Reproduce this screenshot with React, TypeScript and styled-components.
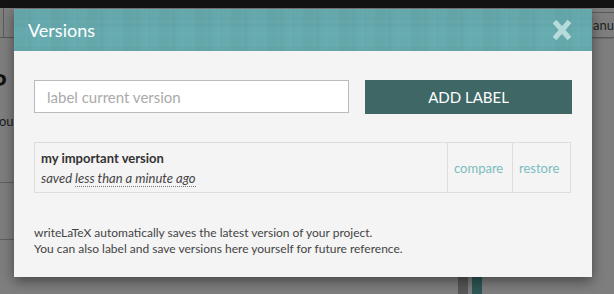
import styled, { createGlobalStyle } from "styled-components";

const GlobalStyle = createGlobalStyle`
  body {
    margin: 0;
    font-family: "Lato", "Open Sans", sans-serif;
  }
`;

const Page = styled.div`
  position: relative;
  width: 614px;
  height: 294px;
  overflow: hidden;
  display: grid;
  grid-template-rows: 8px 1fr;
  background: #7e7e7e;
`;

const TopBar = styled.div`
  background: #131313;
`;

const Backdrop = styled.div`
  display: grid;
  grid-template-columns: 14px 1fr 22px;
  overflow: hidden;
`;

const LeftStrip = styled.div`
  display: flex;
  flex-direction: column;
  overflow: hidden;
  color: #111;
`;

const ToolBox = styled.div`
  height: 29px;
  flex: none;
  border-bottom: 1px solid #565656;
  background: linear-gradient(
    90deg,
    transparent 3px,
    #5c5c5c 3px,
    #5c5c5c 4px,
    transparent 4px
  );
`;

const BigLetter = styled.div`
  margin: 31px 0 0 -9px;
  font-size: 25px;
  font-weight: 700;
  line-height: 26px;
`;

const SmallText = styled.div`
  margin: 18px 0 0 -1px;
  font-size: 13px;
  line-height: 16px;
  color: #1c1c1c;
`;

const Rule = styled.div<{ $gap: number }>`
  flex: none;
  height: 1px;
  margin-top: ${(p) => p.$gap}px;
  background: #5f5f5f;
`;

const Middle = styled.div`
  display: flex;
  flex-direction: column;
  justify-content: flex-end;
`;

const Bars = styled.div`
  display: flex;
  gap: 4px;
  height: 40px;
  margin-left: 444px;
`;

const Bar = styled.div<{ $tone: string }>`
  width: 10px;
  background: ${(p) => p.$tone};
`;

const RightStrip = styled.div`
  overflow: hidden;
`;

const ManualTab = styled.div`
  margin-top: 4px;
  height: 24px;
  border-top: 1px solid #5a5a5a;
  border-bottom: 1px solid #5a5a5a;
  box-shadow: 0 2px 0 -1px #6a6a6a;
  display: flex;
  align-items: center;
  padding-left: 1px;
  font-size: 13px;
  color: #1e1e1e;
  white-space: nowrap;
`;

const Overlay = styled.div`
  position: absolute;
  inset: 0;
  padding: 9px 0 0 14px;
`;

const Modal = styled.div`
  width: 578px;
  background: #f4f4f4;
  box-shadow: 0 4px 12px rgba(0, 0, 0, 0.45);
`;

const Header = styled.div`
  height: 42px;
  display: flex;
  align-items: center;
  justify-content: space-between;
  padding: 0 20px 0 14px;
  background-color: #66acaf;
  background-image: linear-gradient(
      rgba(255, 255, 255, 0.035) 1px,
      transparent 1px
    ),
    linear-gradient(90deg, rgba(255, 255, 255, 0.035) 1px, transparent 1px),
    linear-gradient(90deg, rgba(0, 0, 0, 0.025) 50%, transparent 50%),
    linear-gradient(rgba(0, 0, 0, 0.025) 50%, transparent 50%);
  background-size: 12px 12px, 12px 12px, 36px 24px, 24px 36px;
`;

const Title = styled.h3`
  margin: 0;
  font-size: 18px;
  font-weight: 400;
  color: #fff;
`;

const CloseButton = styled.button`
  display: flex;
  padding: 0;
  border: 0;
  background: none;
  cursor: pointer;
`;

const Body = styled.div`
  padding: 29px 20px 20px;
`;

const LabelForm = styled.div`
  display: flex;
  gap: 16px;
  align-items: flex-start;
`;

const LabelInput = styled.input`
  width: 315px;
  height: 33px;
  box-sizing: border-box;
  border: 1px solid #bbb;
  padding: 0 12px;
  background: #fff;
  font-family: "Lato", sans-serif;
  font-size: 15px;
  color: #333;
  outline: none;

  &::placeholder {
    color: #aaa;
  }
`;

const AddButton = styled.button`
  flex: 1;
  height: 34px;
  border: 0;
  background: #3e6766;
  color: #fff;
  font-family: "Lato", sans-serif;
  font-size: 15px;
  text-transform: uppercase;
  cursor: pointer;
`;

const VersionRow = styled.div`
  margin-top: 28px;
  width: 537px;
  height: 51px;
  box-sizing: border-box;
  display: flex;
  border: 1px solid #ddd;
`;

const VersionInfo = styled.div`
  flex: 1;
  padding: 5px 6px;
  font-size: 13px;
  line-height: 20px;
`;

const VersionName = styled.div`
  font-weight: 700;
  color: #333;
`;

const SavedAt = styled.div`
  font-style: italic;
  color: #444;
`;

const Ago = styled.span`
  border-bottom: 1px dotted #777;
`;

const ActionCell = styled.a<{ $width: number }>`
  width: ${(p) => p.$width}px;
  box-sizing: border-box;
  display: flex;
  align-items: center;
  padding-left: 6px;
  border-left: 1px solid #ddd;
  font-size: 13px;
  color: #7bbcbe;
  text-decoration: none;
  cursor: pointer;
`;

const Footer = styled.p`
  margin: 32px 0 0;
  font-size: 12px;
  line-height: 16px;
  color: #444;
`;

const CloseIcon = () => (
  <svg width="20" height="22" viewBox="0 0 20 22">
    <path
      d="M2.5 2.5 L17.5 19.5 M17.5 2.5 L2.5 19.5"
      stroke="#b5dbdb"
      strokeWidth="5"
      fill="none"
    />
  </svg>
);

const App = () => {
  return (
    <>
      <GlobalStyle />
      <Page>
        <TopBar />
        <Backdrop>
          <LeftStrip>
            <ToolBox />
            <BigLetter>P</BigLetter>
            <SmallText>ou</SmallText>
            <Rule $gap={53} />
            <Rule $gap={56} />
          </LeftStrip>
          <Middle>
            <Bars>
              <Bar $tone="#575757" />
              <Bar $tone="#2e5756" />
            </Bars>
          </Middle>
          <RightStrip>
            <ManualTab>anual</ManualTab>
          </RightStrip>
        </Backdrop>
        <Overlay>
          <Modal>
            <Header>
              <Title>Versions</Title>
              <CloseButton aria-label="close">
                <CloseIcon />
              </CloseButton>
            </Header>
            <Body>
              <LabelForm>
                <LabelInput placeholder="label current version" />
                <AddButton>Add label</AddButton>
              </LabelForm>
              <VersionRow>
                <VersionInfo>
                  <VersionName>my important version</VersionName>
                  <SavedAt>
                    saved <Ago>less than a minute ago</Ago>
                  </SavedAt>
                </VersionInfo>
                <ActionCell $width={65}>compare</ActionCell>
                <ActionCell $width={58}>restore</ActionCell>
              </VersionRow>
              <Footer>
                writeLaTeX automatically saves the latest version of your
                project.
                <br />
                You can also label and save versions here yourself for future
                reference.
              </Footer>
            </Body>
          </Modal>
        </Overlay>
      </Page>
    </>
  );
};

export default App;
